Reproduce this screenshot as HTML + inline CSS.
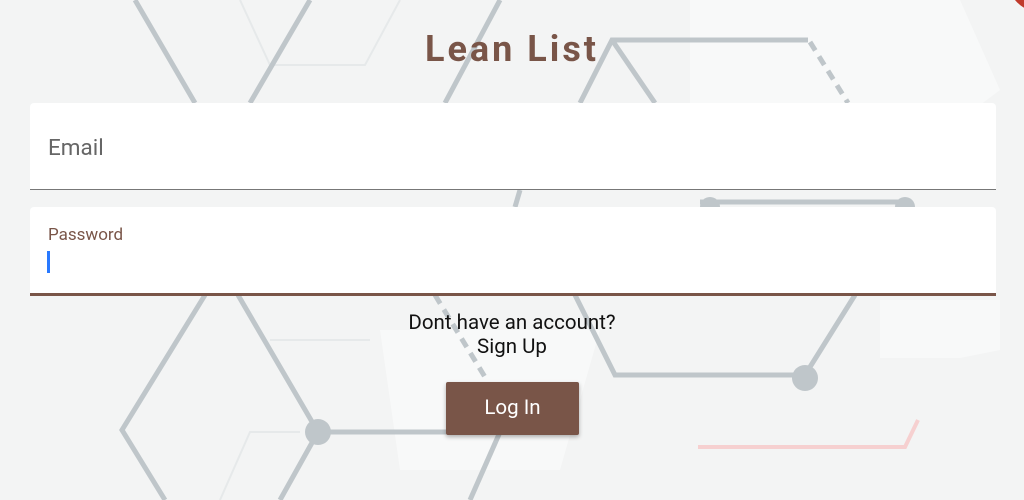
<!DOCTYPE html>
<html><head><style>
body{margin:0;width:1024px;height:500px;overflow:hidden;background:#f3f4f4;font-family:"Roboto","Liberation Sans",sans-serif;position:relative}
svg{position:absolute;left:0;top:0}
.title{position:absolute;top:28px;left:0;width:1024px;text-align:center;font-size:36px;font-weight:bold;color:#795548;letter-spacing:3px}
.card{position:absolute;left:30px;width:966px;background:#fff;border-radius:4px 4px 0 0}
.email{top:103px;height:86px;border-bottom:1.5px solid #777}
.email span{position:absolute;left:18px;top:32px;font-size:22.5px;color:#666}
.pw{top:207px;height:86px;border-bottom:3px solid #795548}
.pw .l{position:absolute;left:18px;top:18px;font-size:17px;color:#795548}
.pw .c{position:absolute;left:17px;top:44px;width:3px;height:22px;background:#2979ff}
.t{position:absolute;left:0;width:1024px;text-align:center;font-size:20.5px;color:#111}
.btn{position:absolute;left:446px;top:382px;width:133px;height:53px;background:#795548;color:#fff;font-size:20.5px;text-align:center;line-height:53px;border-radius:2px;box-shadow:0 2px 4px rgba(0,0,0,.3)}
</style></head><body>
<svg width="1024" height="500">
<g fill="#f8f9f9"><polygon points="690,0 960,0 1000,90 960,120 690,120"/><polygon points="880,300 1000,300 1000,350 960,358 880,358"/><polygon points="380,330 600,330 560,470 400,470"/></g>
<g stroke="#e6e9ea" stroke-width="2" fill="none"><polyline points="240,0 270,65 365,65 400,0"/><polyline points="220,500 250,432 300,432"/><polyline points="270,340 370,340"/></g>
<g stroke="#bfc6ca" stroke-width="5" fill="none">
<line x1="135" y1="0" x2="195" y2="103"/><line x1="310" y1="0" x2="250" y2="103"/><line x1="500" y1="0" x2="445" y2="103"/>
<polyline points="580,103 612,40 808,40"/><line x1="612" y1="40" x2="655" y2="103"/>
<line x1="810" y1="42" x2="848" y2="103" stroke-dasharray="10,7"/>
<polyline points="205,295 122,430 165,500"/><polyline points="238,295 318,432 280,500"/><line x1="318" y1="432" x2="446" y2="432"/>
<line x1="435" y1="295" x2="488" y2="382" stroke-dasharray="10,7"/>
<polyline points="575,295 615,375 805,375 855,295"/><line x1="500" y1="432" x2="470" y2="500"/>
<line x1="520" y1="190" x2="515" y2="207"/><line x1="700" y1="202" x2="910" y2="202"/>
</g>
<g fill="#bfc6ca"><circle cx="318" cy="432" r="13"/><circle cx="805" cy="378" r="13"/><circle cx="710" cy="207" r="10"/><circle cx="905" cy="207" r="10"/></g>
<polyline points="698,447 905,447 918,420" stroke="#f6d0d0" stroke-width="4" fill="none"/>
<circle cx="1040" cy="-20" r="32" fill="#c0392b"/>
</svg>
<div class="title">Lean List</div>
<div class="card email"><span>Email</span></div>
<div class="card pw"><span class="l">Password</span><div class="c"></div></div>
<div class="t" style="top:311px">Dont have an account?</div>
<div class="t" style="top:335px">Sign Up</div>
<div class="btn">Log In</div>
</body></html>
